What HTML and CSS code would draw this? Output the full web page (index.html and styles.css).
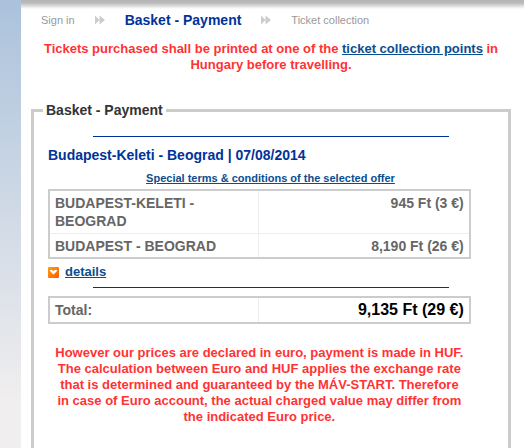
FILE: index.html
```html
<!DOCTYPE html>
<html lang="en">
<head>
    <meta charset="UTF-8">
    <meta name="viewport" content="width=device-width, initial-scale=1.0">
    <title>Basket - Payment</title>
    <link rel="stylesheet" href="styles.css">
</head>
<body>
    <div class="page">
        <ol class="steps">
            <li>Sign in</li>
            <li class="arrow" aria-hidden="true">
                <svg width="10" height="10" viewBox="0 0 11 10"><path d="M0 0 5 5 0 10zM5 0l6 5-6 5z" fill="#ccc"/></svg>
            </li>
            <li class="current">Basket - Payment</li>
            <li class="arrow" aria-hidden="true">
                <svg width="10" height="10" viewBox="0 0 11 10"><path d="M0 0 5 5 0 10zM5 0l6 5-6 5z" fill="#ccc"/></svg>
            </li>
            <li>Ticket collection</li>
        </ol>

        <p class="warning">Tickets purchased shall be printed at one of the <a href="#">ticket collection points</a> in Hungary before travelling.</p>

        <fieldset class="basket">
            <legend>Basket - Payment</legend>
            <hr>
            <h2>Budapest-Keleti - Beograd | 07/08/2014</h2>
            <p class="terms"><a href="#">Special terms &amp; conditions of the selected offer</a></p>
            <table class="items">
                <tr>
                    <th scope="row">BUDAPEST-KELETI - BEOGRAD</th>
                    <td>945 Ft (3 €)</td>
                </tr>
                <tr>
                    <th scope="row">BUDAPEST - BEOGRAD</th>
                    <td>8,190 Ft (26 €)</td>
                </tr>
            </table>
            <div class="details">
                <svg width="11" height="11" viewBox="0 0 11 11" aria-hidden="true">
                    <defs>
                        <linearGradient id="orange" x1="0" y1="0" x2="1" y2="1">
                            <stop offset="0" stop-color="#ffa011"/>
                            <stop offset="1" stop-color="#ff5a00"/>
                        </linearGradient>
                    </defs>
                    <rect width="11" height="11" rx="1" fill="url(#orange)"/>
                    <path d="M2 3h2l1.500 1L7 3h2v1L5.500 7.500 2 4z" fill="#fff"/>
                </svg>
                <a href="#">details</a>
            </div>
            <hr>
            <table class="items total">
                <tr>
                    <th scope="row">Total:</th>
                    <td>9,135 Ft (29 €)</td>
                </tr>
            </table>
            <p class="warning note">However our prices are declared in euro, payment is made in HUF. The calculation between Euro and HUF applies the exchange rate that is determined and guaranteed by the MÁV-START. Therefore in case of Euro account, the actual charged value may differ from the indicated Euro price.</p>
        </fieldset>
    </div>
</body>
</html>
```
FILE: styles.css
```css
body {
    margin: 0;
    padding-left: 21px;
    font-family: "Liberation Sans", Arial, sans-serif;
    font-size: 13px;
    line-height: 16px;
    background: linear-gradient(#abc2dc, #f0eeee 400px);
}

.page {
    background: linear-gradient(#b4b4b4, #bbb 3px, #fff 9px);
    padding: 10px 13px 0 10px;
}

a {
    color: #0b4d91;
}

.steps {
    display: flex;
    align-items: center;
    gap: 20px;
    list-style: none;
    margin: 0 0 11px;
    padding: 0 10px;
    height: 20px;
    font-size: 11px;
    color: #999;
}

.arrow svg {
    display: block;
}

.steps .current {
    font-size: 14px;
    font-weight: bold;
    color: #039;
}

.warning {
    margin: 0;
    text-align: center;
    font-weight: bold;
    color: #f33;
}

.basket {
    margin: 29px 0 0;
    padding: 18px 15px 26px 14px;
    border: 3px solid #ccc;
}

.basket legend {
    margin-left: -5px;
    padding: 0 3px;
    font-size: 14px;
    font-weight: bold;
    color: #333;
}

hr {
    width: 80%;
    height: 1px;
    margin: 0 auto;
    border: 0;
    background: #039;
}

h2 {
    margin: 10px 0 7px;
    font-size: 14px;
    line-height: 16px;
    color: #039;
}

.terms {
    margin: 0 0 3px;
    text-align: center;
    font-size: 11px;
    font-weight: bold;
}

.items {
    width: 95%;
    table-layout: fixed;
    border: 2px solid #ccc;
    border-spacing: 0;
    font-size: 14px;
    font-weight: bold;
    color: #666;
}

.items th,
.items td {
    padding: 3px 5px;
    line-height: 18px;
    vertical-align: top;
}

.items th {
    text-align: left;
    border-right: 1px solid #eee;
}

.items td {
    text-align: right;
}

.items tr + tr th,
.items tr + tr td {
    border-top: 1px solid #eee;
    padding-bottom: 2px;
}

.details {
    display: flex;
    align-items: center;
    gap: 6px;
    margin: 5px 0 7px;
    font-weight: bold;
}

.total {
    margin-top: 8px;
}

.total td {
    font-size: 16px;
    color: #000;
}

.note {
    box-sizing: border-box;
    width: 95%;
    margin-top: 21px;
    padding: 0 6px;
}
```
